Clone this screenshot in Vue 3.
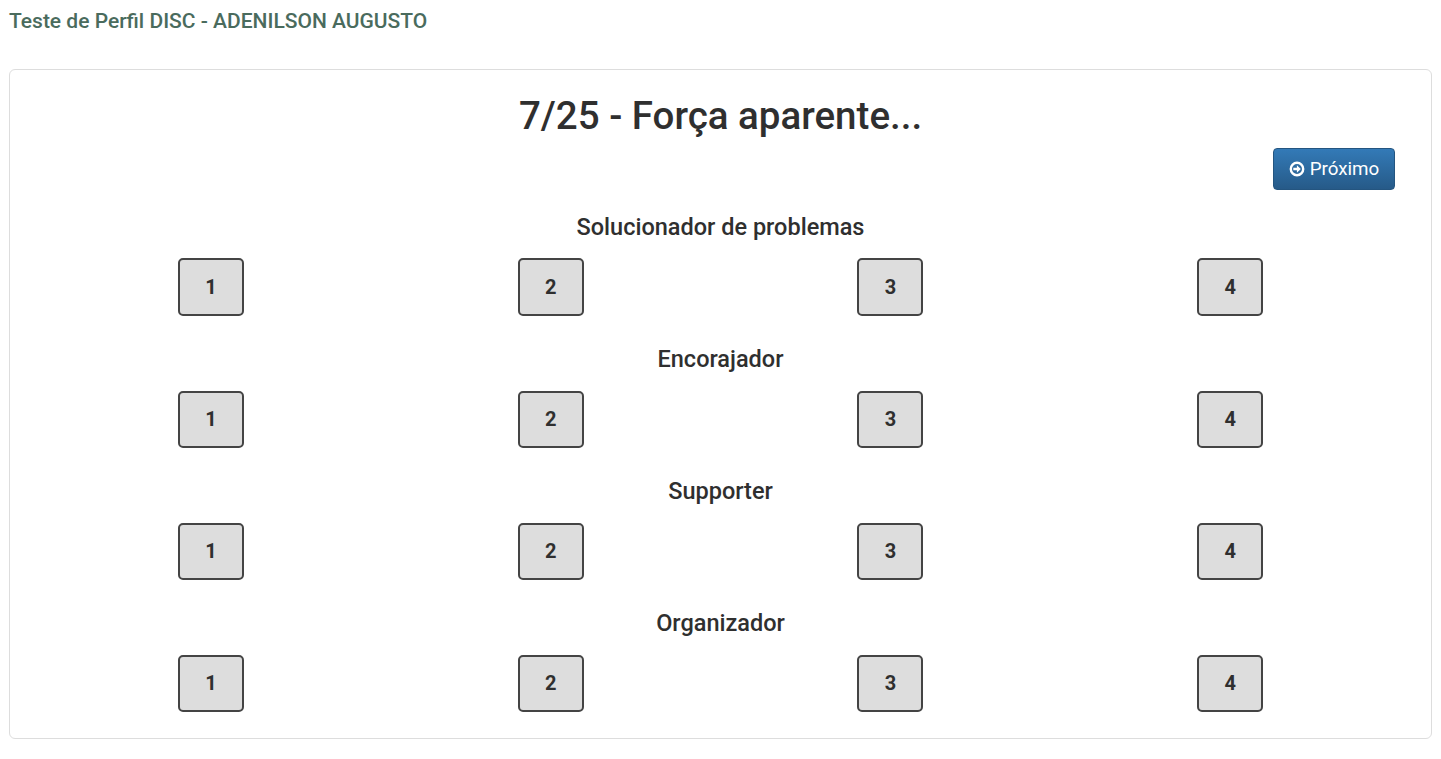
<template>
  <div class="page">
    <h5 class="page-title">Teste de Perfil DISC - ADENILSON AUGUSTO</h5>
    <div class="card">
      <h2 class="question">7/25 - Força aparente...</h2>
      <div class="actions">
        <button class="btn-next">
          <svg class="next-icon" viewBox="0 0 16 16" width="16" height="16">
            <circle cx="8" cy="8" r="6.2" fill="none" stroke="#fff" stroke-width="2.4" />
            <path d="M4.3 6.8h3.6V4.3L11.8 8 7.9 11.7V9.2H4.3z" fill="#fff" />
          </svg>
          Próximo
        </button>
      </div>
      <div v-for="option in options" :key="option" class="option">
        <div class="option-label">{{ option }}</div>
        <div class="scale">
          <div v-for="n in 4" :key="n" class="scale-cell">
            <button class="scale-btn">{{ n }}</button>
          </div>
        </div>
      </div>
    </div>
  </div>
</template>

<script setup>
const options = ['Solucionador de problemas', 'Encorajador', 'Supporter', 'Organizador']
</script>

<style scoped>
.page {
  padding: 11px 9px 20px 9px;
  font-family: Roboto, "Liberation Sans", sans-serif;
}

.page-title {
  margin: 0 0 37px;
  font-size: 21px;
  line-height: 21px;
  font-weight: 500;
  color: #4a6b5d;
}

.card {
  height: 670px;
  box-sizing: border-box;
  border: 1px solid #dddddd;
  border-radius: 6px;
  background: #fff;
  padding: 24px 31px 0;
}

.question {
  margin: 0;
  text-align: center;
  font-size: 38.5px;
  line-height: 43px;
  font-weight: 500;
  color: #2f2f2f;
}

.actions {
  display: flex;
  justify-content: flex-end;
  margin-top: 11px;
  padding-right: 5px;
}

.btn-next {
  display: flex;
  align-items: center;
  justify-content: center;
  gap: 5px;
  width: 122px;
  height: 42px;
  padding: 0 0 1px;
  border: 1px solid #245580;
  border-radius: 4px;
  background: linear-gradient(to bottom, #337ab7, #265a88);
  color: #fff;
  font-family: inherit;
  font-size: 18.8px;
  font-weight: 400;
}

.next-icon {
  flex: none;
}

.option-label {
  text-align: center;
  font-size: 23.5px;
  line-height: 26px;
  font-weight: 500;
  color: #2f2f2f;
}

.option {
  margin-bottom: 29.95px;
}

.actions + .option {
  margin-top: 24.1px;
}

.scale {
  display: grid;
  grid-template-columns: repeat(4, 1fr);
  margin-top: 18.35px;
}

.scale-cell {
  display: flex;
  justify-content: center;
}

.scale-btn {
  width: 66px;
  height: 57.8px;
  padding: 0 0 1px;
  box-sizing: border-box;
  border: 2px solid #444444;
  border-radius: 5px;
  background: #dddddd;
  color: #2f2f2f;
  font-family: Roboto, "Liberation Sans", sans-serif;
  font-size: 20px;
  font-weight: 700;
}
</style>
